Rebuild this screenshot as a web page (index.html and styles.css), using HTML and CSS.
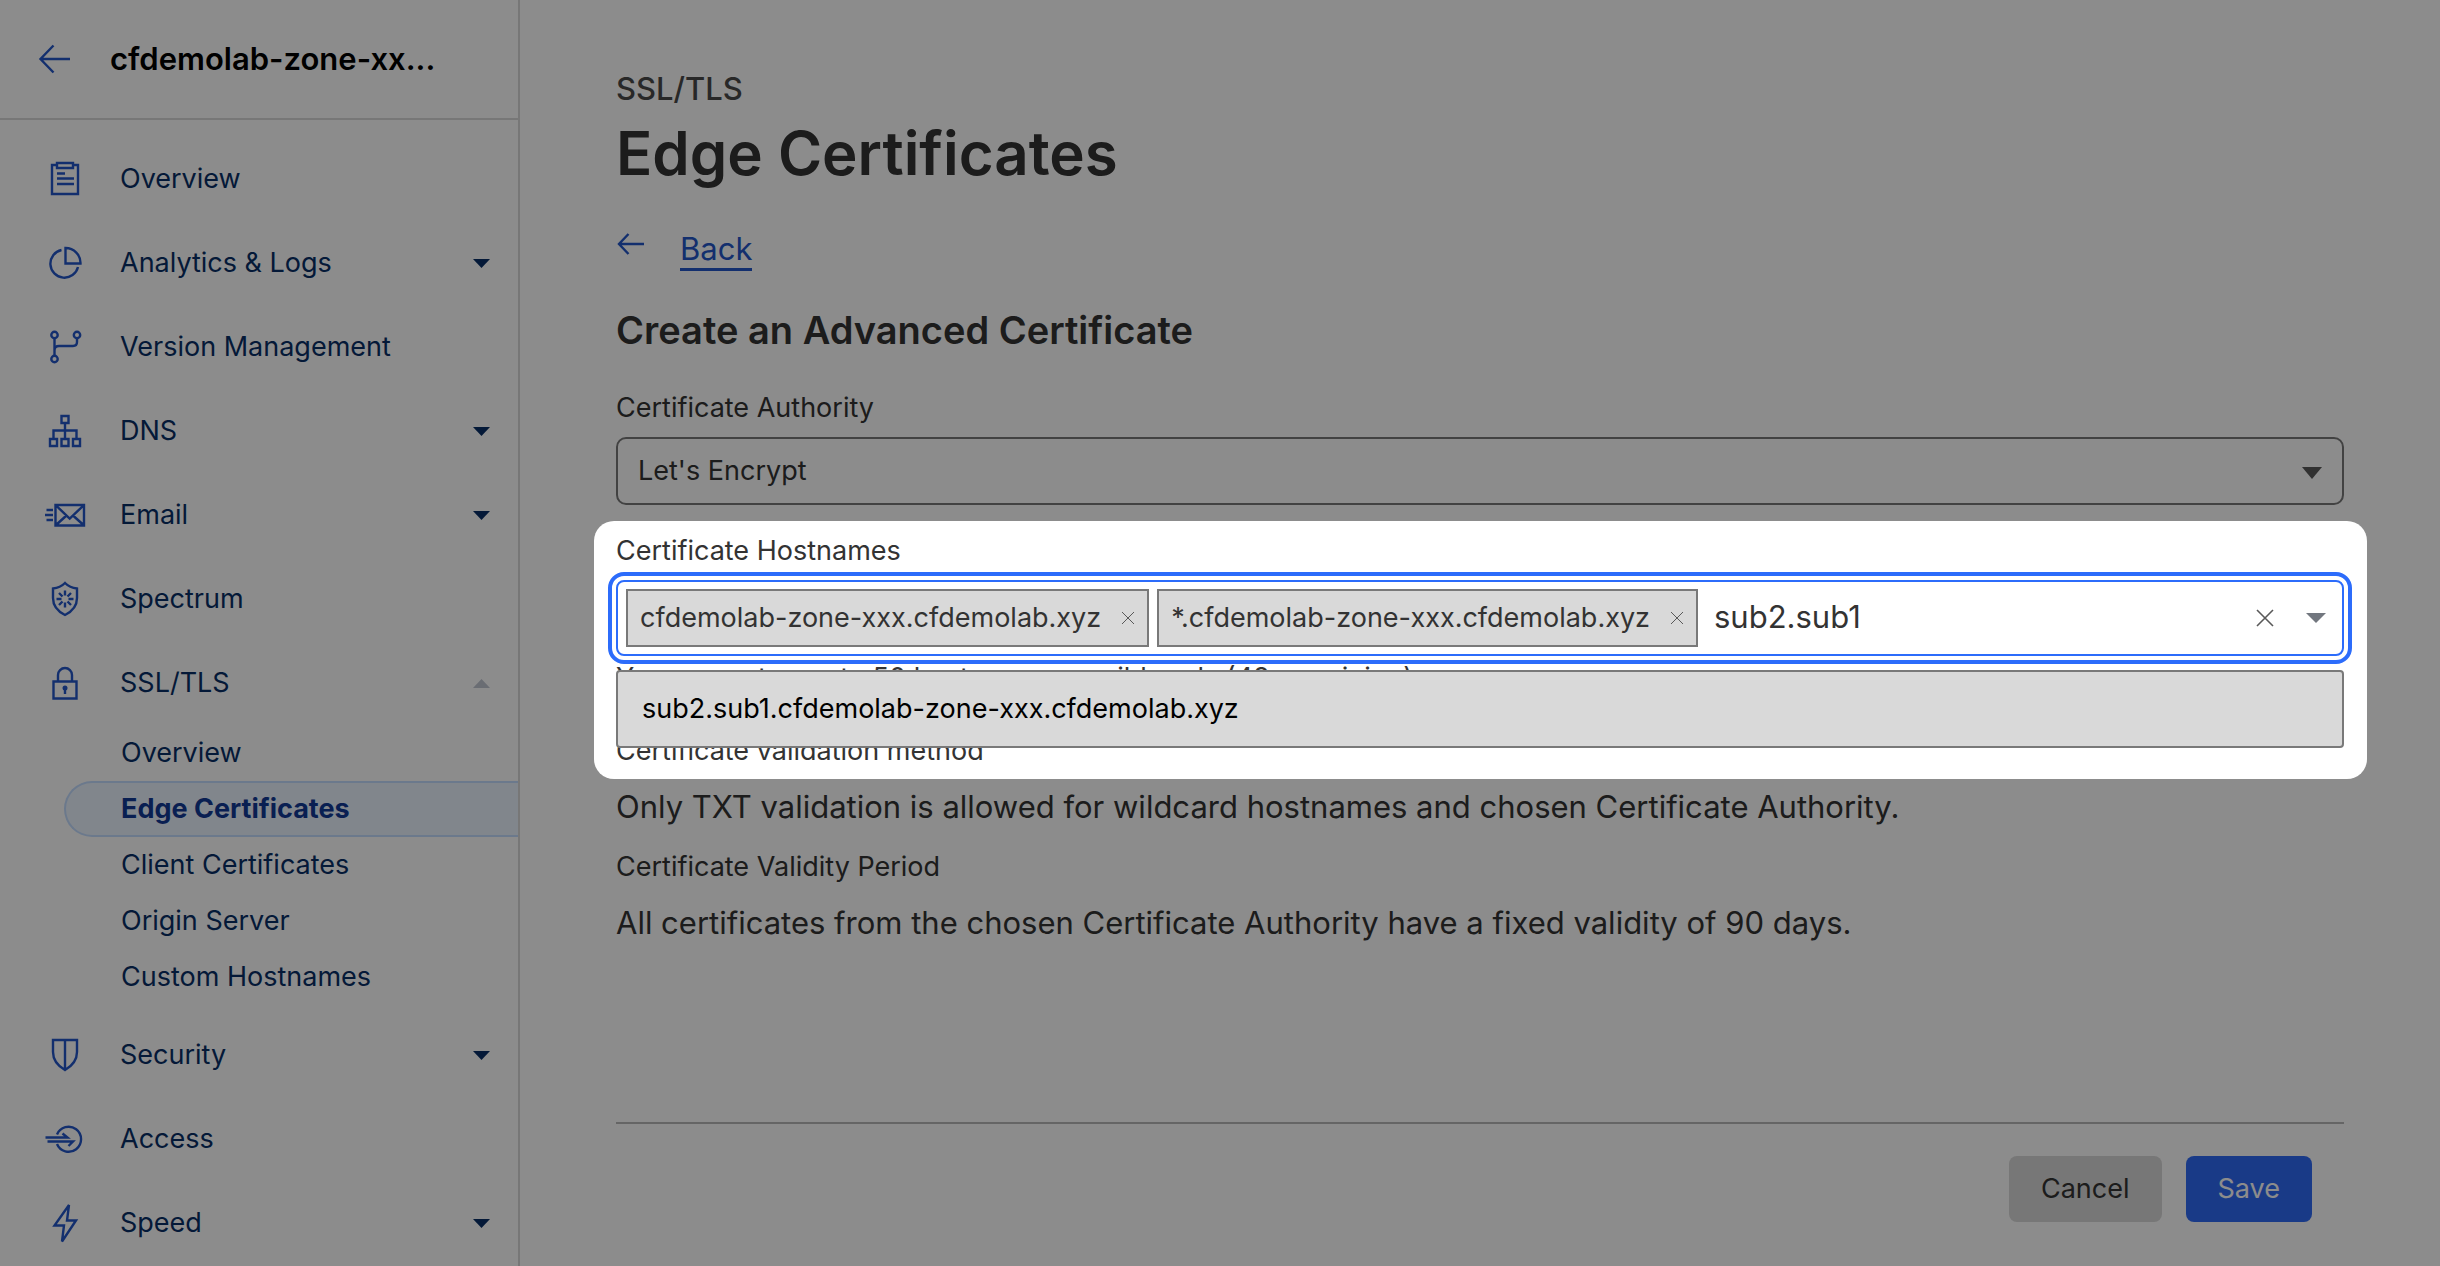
FILE: index.html
```html
<!DOCTYPE html>
<html lang="en">
<head>
<meta charset="utf-8">
<title>Edge Certificates</title>
<link rel="stylesheet" href="styles.css">
</head>
<body>
<div class="app">
  <aside class="sidebar">
    <header class="zone">
      <a class="zone-back" href="#" aria-label="All zones">
        <svg class="arrow-large" viewBox="0 0 34 32"><path d="M15.500 2.500 2.500 16l13 13.500M2.500 16H32"/></svg>
      </a>
      <span class="zone-name">cfdemolab-zone-xx...</span>
    </header>
    <nav class="nav">
      <a class="nav-row" href="#">
        <svg class="icon" viewBox="0 0 40 40"><path d="M12 6H7v29h26V6h-5M12 4h16v5H12zM12 14.500h8M12 19.500h17M12 25h17"/></svg>
        <span class="nav-text">Overview</span>
      </a>
      <a class="nav-row" href="#">
        <svg class="icon" viewBox="0 0 40 40"><path d="M16.500 7A14 14 0 1 0 33 24M20.500 5v15.500H35.500A15 15 0 0 0 20.500 5z"/></svg>
        <span class="nav-text">Analytics &amp; Logs</span>
        <svg class="caret" viewBox="0 0 17 9"><path d="M0 0h17L8.500 9z"/></svg>
      </a>
      <a class="nav-row" href="#">
        <svg class="icon" viewBox="0 0 40 40"><circle cx="9.500" cy="8" r="3.200"/><circle cx="32" cy="8" r="3.200"/><circle cx="9.500" cy="32" r="3.200"/><path d="M9.500 11.500v17M32 11.500V15q0 4-4 4H14q-4.500 0-4.500 4.500"/></svg>
        <span class="nav-text">Version Management</span>
      </a>
      <a class="nav-row" href="#">
        <svg class="icon" viewBox="0 0 40 40"><path d="M16.500 5h7v7h-7zM5 28h7v7H5zM16.500 28h7v7h-7zM28 28h7v7h-7zM20 12v16M8.500 28v-8.500h23V28"/></svg>
        <span class="nav-text">DNS</span>
        <svg class="caret" viewBox="0 0 17 9"><path d="M0 0h17L8.500 9z"/></svg>
      </a>
      <a class="nav-row" href="#">
        <svg class="icon" viewBox="0 0 40 40"><path d="M10.500 10H39v20.500H10.500zM11 10.500l13.700 13L38.500 10.500M11 30l10.500-9.500M38.500 30 28 20.500M1.500 15H8M0 20h8M1.500 25H8"/></svg>
        <span class="nav-text">Email</span>
        <svg class="caret" viewBox="0 0 17 9"><path d="M0 0h17L8.500 9z"/></svg>
      </a>
      <a class="nav-row" href="#">
        <svg class="icon" viewBox="0 0 40 40"><path d="M20 4c-3 3-7 5-12 5.500V19c0 7.500 5 13.500 12 17 7-3.500 12-9.500 12-17V9.500C27 9 23 7 20 4z"/><path d="M20 16.500v-5M20 23.500v5M16.500 20h-5M23.500 20h5M17.500 17.500 14 14M22.500 17.500 26 14M17.500 22.500 14 26M22.500 22.500 26 26"/></svg>
        <span class="nav-text">Spectrum</span>
      </a>
      <a class="nav-row" href="#">
        <svg class="icon" viewBox="0 0 40 40"><path d="M8.500 18.500h23v17h-23zM13 18.500V12a7 7 0 0 1 14 0v6.500M20 25v6"/><circle class="dot" cx="20" cy="25" r="2.500"/></svg>
        <span class="nav-text">SSL/TLS</span>
        <svg class="caret caret-open" viewBox="0 0 17 9"><path d="M0 9h17L8.500 0z"/></svg>
      </a>
      <div class="subnav">
        <a class="sub" href="#">Overview</a>
        <a class="sub sub-active" href="#">Edge Certificates</a>
        <a class="sub" href="#">Client Certificates</a>
        <a class="sub" href="#">Origin Server</a>
        <a class="sub" href="#">Custom Hostnames</a>
      </div>
      <a class="nav-row" href="#">
        <svg class="icon" viewBox="0 0 40 40"><path d="M8 5h24v12c0 8-5 14-12 18C13 31 8 25 8 17zM20 5v30"/></svg>
        <span class="nav-text">Security</span>
        <svg class="caret" viewBox="0 0 17 9"><path d="M0 0h17L8.500 9z"/></svg>
      </a>
      <a class="nav-row" href="#">
        <svg class="icon" viewBox="0 0 40 40"><path d="M12 15.500a12.500 12.500 0 1 1 0 9.500M.5 18.500H22.500L17.500 14.500M2.500 22.500H28L23.500 27"/></svg>
        <span class="nav-text">Access</span>
      </a>
      <a class="nav-row" href="#">
        <svg class="icon" viewBox="0 0 40 40"><path d="M24 2 9.500 22.500H19L17 38.500 31 17.500h-9z"/></svg>
        <span class="nav-text">Speed</span>
        <svg class="caret" viewBox="0 0 17 9"><path d="M0 0h17L8.500 9z"/></svg>
      </a>
    </nav>
  </aside>

  <main class="main">
    <p class="section-name">SSL/TLS</p>
    <h1 class="title">Edge Certificates</h1>
    <div class="back">
      <svg class="arrow-small" viewBox="0 0 28 24"><path d="M12.500 2 3 12l9.500 10M3 12h25"/></svg>
      <a class="back-link" href="#">Back</a>
    </div>
    <h2 class="subtitle">Create an Advanced Certificate</h2>

    <form class="form">
      <div class="field">
        <label class="label" for="authority">Certificate Authority</label>
        <div class="select-box">
          <select class="select" id="authority"><option>Let's Encrypt</option></select>
          <svg class="select-arrow" viewBox="0 0 20 12"><path d="M0 0h20L10 12z"/></svg>
        </div>
      </div>

      <div class="field spotlit">
        <label class="label" for="hostnames">Certificate Hostnames</label>
        <div class="combo">
          <span class="chip">cfdemolab-zone-xxx.cfdemolab.xyz
            <button class="chip-remove" type="button" aria-label="Remove"><svg class="cross-small" viewBox="0 0 14 14"><path d="M1 1l12 12M13 1 1 13"/></svg></button>
          </span>
          <span class="chip">*.cfdemolab-zone-xxx.cfdemolab.xyz
            <button class="chip-remove" type="button" aria-label="Remove"><svg class="cross-small" viewBox="0 0 14 14"><path d="M1 1l12 12M13 1 1 13"/></svg></button>
          </span>
          <input class="combo-input" id="hostnames" type="text" value="sub2.sub1" autocomplete="off">
          <button class="combo-button" type="button" aria-label="Clear all"><svg class="cross" viewBox="0 0 18 18"><path d="M1 1l16 16M17 1 1 17"/></svg></button>
          <button class="combo-button" type="button" aria-label="Show suggestions"><svg class="combo-arrow" viewBox="0 0 20 10"><path d="M0 0h20L10 10z"/></svg></button>
          <ul class="options" role="listbox">
            <li class="option" role="option">sub2.sub1.cfdemolab-zone-xxx.cfdemolab.xyz</li>
          </ul>
        </div>
        <p class="hint">You can enter up to 50 hostnames or wildcards (48 remaining)</p>
      </div>

      <section class="info info-first">
        <h3 class="label">Certificate validation method</h3>
        <p class="info-text">Only TXT validation is allowed for wildcard hostnames and chosen Certificate Authority.</p>
      </section>
      <section class="info">
        <h3 class="label">Certificate Validity Period</h3>
        <p class="info-text">All certificates from the chosen Certificate Authority have a fixed validity of 90 days.</p>
      </section>

      <footer class="actions">
        <button class="button" type="button">Cancel</button>
        <button class="button button-primary" type="submit">Save</button>
      </footer>
    </form>
  </main>
</div>
</body>
</html>
```

FILE: styles.css
```css
* { box-sizing: border-box; }

body {
  margin: 0;
  background: #fff;
  color: #333;
  font-family: Inter, "Liberation Sans", sans-serif;
  font-size: 27px;
  line-height: 36px;
  overflow: hidden;
}

h1, h2, h3, p, ul { margin: 0; padding: 0; font-weight: 400; }
a { color: inherit; text-decoration: none; }
button, input, select { font: inherit; color: inherit; margin: 0; }
button { border: 0; background: none; padding: 0; }
svg { display: block; flex: none; }

.app {
  display: grid;
  grid-template-columns: 520px 1fr;
  min-height: 100vh;
}

/* Sidebar */
.sidebar { border-right: 2px solid #d9d9d9; color: #082f66; }

.zone {
  display: flex;
  align-items: center;
  gap: 38px;
  height: 120px;
  padding-left: 38px;
  border-bottom: 2px solid #d9d9d9;
}
.zone-name { color: #000; font-size: 31px; font-weight: 600; }
.arrow-large { width: 34px; height: 32px; }
.arrow-large, .arrow-small, .icon {
  fill: none;
  stroke: #2457c8;
  stroke-width: 2.4;
}

.nav { padding-top: 17px; }
.nav-row {
  display: flex;
  align-items: center;
  gap: 35px;
  height: 84px;
  padding: 0 28px 0 45px;
}
.icon { width: 40px; height: 40px; overflow: visible; }
.dot { fill: #2457c8; stroke: none; }
.nav-text { flex: 1; }
.caret { width: 17px; height: 9px; fill: #082f66; }
.caret-open { fill: #c1c6d2; }

.subnav { margin-bottom: 8px; padding-left: 64px; }
.sub {
  display: flex;
  align-items: center;
  height: 56px;
  padding-left: 57px;
}
.sub-active {
  padding-left: 55px;
  border: 2px solid #c3dcff;
  border-right: 0;
  border-radius: 28px 0 0 28px;
  background: #ecf4ff;
  color: #123a95;
  font-weight: 700;
}

/* Main column */
.main { padding: 69px 96px 40px; }
.section-name { font-size: 31px; font-weight: 500; line-height: 40px; color: #494949; }
.title { margin-top: 4px; font-size: 60px; font-weight: 600; line-height: 80px; }
.back { display: flex; gap: 36px; margin-top: 37px; line-height: 38px; }
.arrow-small { width: 28px; height: 24px; margin-top: 2px; }
.back-link { border-bottom: 3px solid #2457c8; color: #2457c8; font-size: 31px; }
.subtitle { margin-top: 35px; font-size: 38px; font-weight: 600; line-height: 48px; }

/* Form */
.form { margin-top: 36px; }
.label { display: block; font-size: 27px; line-height: 36px; }
.field + .field { margin-top: 28px; }

.select-box { position: relative; margin-top: 11px; }
.select {
  display: block;
  width: 100%;
  height: 68px;
  padding: 0 60px 0 20px;
  border: 2px solid #797979;
  border-radius: 10px;
  background: #fff;
  appearance: none;
}
.select-arrow {
  position: absolute;
  top: 30px;
  right: 22px;
  width: 20px;
  height: 12px;
  fill: #595959;
}

/* Dims everything outside the hostnames field */
.spotlit { position: relative; }
.spotlit::after {
  content: "";
  position: absolute;
  z-index: 3;
  inset: -12px -23px -83px -22px;
  border-radius: 20px;
  box-shadow: 0 0 0 9999px rgba(0, 0, 0, .45);
  pointer-events: none;
}

.combo {
  position: relative;
  display: flex;
  align-items: center;
  gap: 8px;
  height: 76px;
  margin-top: 11px;
  padding: 0 8px;
  border: 2px solid #2c6cfb;
  border-radius: 8px;
  outline: 4px solid #2c6cfb;
  outline-offset: 4px;
}
.chip {
  display: flex;
  align-items: center;
  gap: 20px;
  height: 58px;
  padding: 0 12px;
  border: 2px solid #797979;
  background: #d9d9d9;
  white-space: nowrap;
}
.cross-small { width: 14px; height: 14px; }
.cross { width: 18px; height: 18px; }
.cross-small, .cross { fill: none; stroke: #595959; stroke-width: 1; }
.cross { stroke-width: 1.6; }
.combo-input {
  flex: 1;
  min-width: 0;
  height: 58px;
  padding: 0 8px 4px;
  border: 0;
  outline: 0;
  background: none;
  font-size: 31px;
}
.combo-button { padding: 0 8px; }
.combo-button + .combo-button { margin-left: 8px; }
.combo-arrow { width: 20px; height: 10px; fill: #72777f; }

.options {
  position: absolute;
  z-index: 2;
  top: 88px;
  left: -2px;
  right: -2px;
  padding: 19px 24px;
  border: 2px solid #797979;
  border-radius: 4px;
  background: #d9d9d9;
  color: #000;
  list-style: none;
}
.hint { margin-top: 4px; }

.info { margin-top: 20px; }
.info-first { margin-top: 37px; }
.info-text { margin-top: 16px; font-size: 31px; line-height: 44px; }

.actions {
  display: flex;
  justify-content: flex-end;
  gap: 24px;
  margin-top: 177px;
  padding: 32px 32px 0 0;
  border-top: 2px solid #b8b8b8;
}
.button { height: 66px; padding: 0 32px; border-radius: 8px; background: #d9d9d9; }
.button-primary { background: #2f6bf6; color: #fff; }
```
